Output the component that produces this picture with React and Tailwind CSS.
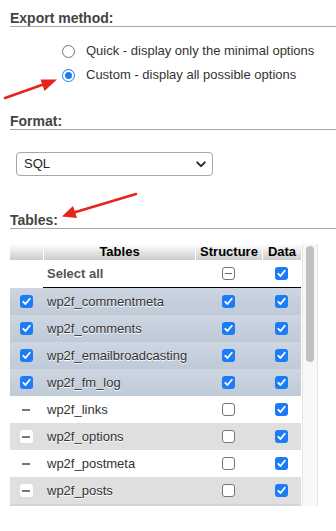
import React from 'react';

const tables = [
  { name: 'wp2f_commentmeta', sel: true, structure: true },
  { name: 'wp2f_comments', sel: true, structure: true },
  { name: 'wp2f_emailbroadcasting', sel: true, structure: true },
  { name: 'wp2f_fm_log', sel: true, structure: true },
  { name: 'wp2f_links', sel: false, structure: false },
  { name: 'wp2f_options', sel: false, structure: false },
  { name: 'wp2f_postmeta', sel: false, structure: false },
  { name: 'wp2f_posts', sel: false, structure: false },
];

function Check({ checked }) {
  if (!checked) {
    return <span className="block w-[13px] h-[13px] rounded-[3px] border border-[#767676] bg-white" />;
  }
  return (
    <span className="flex items-center justify-center w-[13px] h-[13px] rounded-[3px] bg-[#1c7bf6]">
      <svg width="9" height="9" viewBox="0 0 9 9">
        <path d="M1.3 4.8 L3.5 7 L7.8 1.8" fill="none" stroke="white" strokeWidth="1.8" strokeLinecap="round" strokeLinejoin="round" />
      </svg>
    </span>
  );
}

function Indeterminate() {
  return (
    <span className="flex items-center justify-center w-[13px] h-[13px] rounded-[3px] border border-[#767676] bg-white">
      <span className="block w-[7px] h-[1.5px] bg-[#666]" />
    </span>
  );
}

function Dash() {
  return (
    <span className="flex items-center justify-center w-[13px] h-[13px] rounded-[3px] bg-white">
      <span className="block w-[8px] h-[2px] bg-[#777]" />
    </span>
  );
}

function Radio({ checked }) {
  if (checked) {
    return (
      <span className="flex items-center justify-center w-[13px] h-[13px] rounded-full bg-[#1c7bf6]">
        <span className="block w-[7px] h-[7px] rounded-full bg-[#1c7bf6] ring-[2px] ring-white" />
      </span>
    );
  }
  return <span className="block w-[13px] h-[13px] rounded-full border border-[#767676] bg-white" />;
}

function Heading({ children, className }) {
  return (
    <div className={`h-[16px] leading-[16px] text-[14px] font-bold text-[#444] border-b border-[#a8a8a8] box-content ${className}`}>
      {children}
    </div>
  );
}

export default function App() {
  return (
    <div className="relative w-[336px] h-[531px] overflow-hidden bg-white pl-[10px] font-['Liberation_Sans',Arial,sans-serif] text-[#333]">
      <Heading className="mt-[10px]">Export method:</Heading>

      <div className="mt-[12px] ml-[52px] text-[13px]">
        <div className="flex items-center gap-[11px] h-[24px]">
          <Radio checked={false} />
          <span>Quick - display only the minimal options</span>
        </div>
        <div className="flex items-center gap-[11px] h-[24px]">
          <Radio checked />
          <span>Custom - display all possible options</span>
        </div>
      </div>

      <Heading className="mt-[26px]">Format:</Heading>

      <div className="mt-[22px] ml-[6px] w-[197px] h-[24px] rounded-[4px] border border-[#a6a6a6] bg-white flex items-center justify-between pl-[7px] pr-[6px] text-[13px] text-[#222]">
        <span>SQL</span>
        <svg width="10" height="7" viewBox="0 0 10 7">
          <path d="M1.2 1.3 L5 5.2 L8.8 1.3" fill="none" stroke="#222" strokeWidth="1.8" strokeLinecap="round" strokeLinejoin="round" />
        </svg>
      </div>

      <Heading className="mt-[36px]">Tables:</Heading>

      <div className="mt-[15px] flex h-[262px] overflow-hidden">
        <div className="w-[291px] text-[13px]">
          <div className="grid grid-cols-[33px_152px_67px_39px] h-[16px] leading-[16px] font-bold text-black bg-gradient-to-b from-white to-[#cccccc]">
            <div />
            <div className="border-l border-white text-center">Tables</div>
            <div className="border-l border-white text-center">Structure</div>
            <div className="border-l border-white text-center">Data</div>
          </div>
          <div className="grid grid-cols-[33px_152px_67px_39px] h-[28px] bg-white">
            <div />
            <div className="flex items-center pl-[4px] font-bold text-[#555] border-b border-black">Select all</div>
            <div className="flex items-center justify-center border-b border-black"><Indeterminate /></div>
            <div className="flex items-center justify-center border-b border-black"><Check checked /></div>
          </div>
          {tables.map((t, i) => (
            <div
              key={t.name}
              className={`grid grid-cols-[33px_152px_67px_39px] h-[27px] items-center [text-shadow:0_1px_0_#fff] ${
                t.sel ? 'bg-gradient-to-b from-[#cdd6e1] to-[#bfcad8]' : i % 2 === 1 ? 'bg-[#dfdfdf]' : 'bg-white'
              }`}
            >
              <div className="flex justify-center pr-[1px]">{t.sel ? <Check checked /> : <Dash />}</div>
              <div className="pl-[4px] whitespace-nowrap">{t.name}</div>
              <div className="flex justify-center"><Check checked={t.structure} /></div>
              <div className="flex justify-center"><Check checked /></div>
            </div>
          ))}
          <div className="h-[2px] bg-[#cdd6e1]" />
        </div>
        <div className="w-[16px] h-full bg-[#f8f8f8] border-l border-r border-[#e6e6e6] ml-[1px] pt-[2px] flex justify-center">
          <div className="w-[8px] h-[116px] rounded-full bg-[#c1c1c1]" />
        </div>
      </div>

      <svg className="absolute left-0 top-0 pointer-events-none" width="336" height="531">
        <line x1="5" y1="98" x2="46" y2="83.5" stroke="#e8231b" strokeWidth="2.6" strokeLinecap="round" />
        <polygon points="57,79.5 44.5,91 40.5,79.5" fill="#e8231b" />
        <line x1="136" y1="194" x2="74" y2="212.5" stroke="#e8231b" strokeWidth="2.6" strokeLinecap="round" />
        <polygon points="62,216.5 73,206 77,218" fill="#e8231b" />
      </svg>
    </div>
  );
}
